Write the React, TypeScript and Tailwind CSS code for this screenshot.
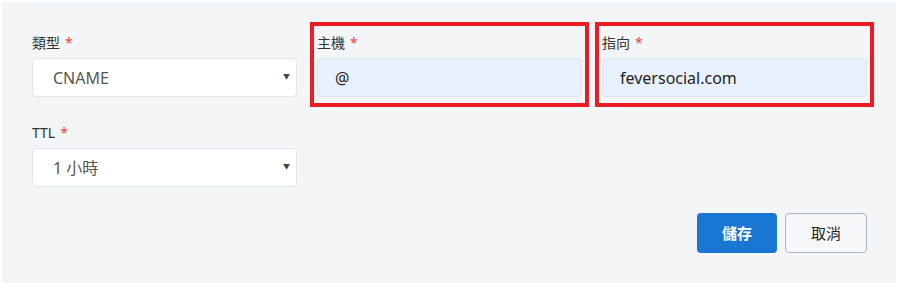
import React from 'react';

const font = { fontFamily: '"Noto Sans", "Noto Sans CJK TC", sans-serif' };

function Label({ text }: { text: string }) {
  return (
    <div className="mb-[5px] flex h-5 items-center text-[14px] leading-5 text-[#333]">
      {text}
      <span className="ml-[5px] text-[#e8453c]">*</span>
    </div>
  );
}

function Select({ value }: { value: string }) {
  return (
    <div className="flex h-[39px] w-[265px] items-center justify-between rounded-[4px] border border-[#e3e5e8] bg-white pl-5 pr-[6px] text-[16px] text-[#555]">
      <span>{value}</span>
      <span className="text-[7px] text-[#444]">▼</span>
    </div>
  );
}

function Input({ value }: { value: string }) {
  return (
    <div className="flex h-[39px] w-[265px] items-center rounded-[4px] border border-[#dfe3ea] bg-[#e8f0fe] pl-[17px] text-[16px] text-[#222]">
      {value}
    </div>
  );
}

// red highlight frame drawn over the field
function Marked({ children }: { children: React.ReactNode }) {
  return (
    <div className="relative">
      {children}
      <div className="pointer-events-none absolute -bottom-[10px] -left-[7px] -right-[7px] -top-[11px] border-4 border-[#ed1c24]" />
    </div>
  );
}

export default function App() {
  return (
    <div className="h-[287px] w-[900px] bg-white pl-[2px] pt-[2px]" style={font}>
      <div className="h-[281px] w-[894px] bg-[#f4f5f7] pl-[30px] pt-[31px]">
        <div className="grid grid-cols-[265px_265px_265px] gap-x-5 gap-y-[26px]">
          <div>
            <Label text="類型" />
            <Select value="CNAME" />
          </div>
          <Marked>
            <Label text="主機" />
            <Input value="@" />
          </Marked>
          <Marked>
            <Label text="指向" />
            <Input value="feversocial.com" />
          </Marked>
          <div>
            <Label text="TTL" />
            <Select value="1 小時" />
          </div>
        </div>
        <div className="mt-[26px] flex w-[835px] justify-end gap-2">
          <button className="h-10 w-20 rounded-[4px] bg-[#1976d2] text-[15px] font-semibold text-white">
            儲存
          </button>
          <button className="h-10 w-[82px] rounded-[4px] border border-[#a9b4c2] bg-[#f6f7f9] text-[15px] text-[#222]">
            取消
          </button>
        </div>
      </div>
    </div>
  );
}
